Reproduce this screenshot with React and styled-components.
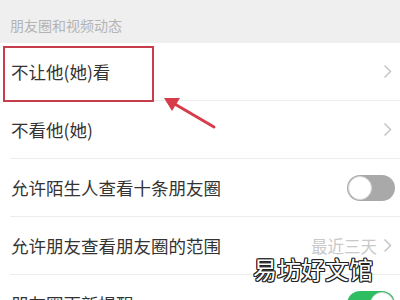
import styled, { createGlobalStyle } from 'styled-components';

const GlobalStyle = createGlobalStyle`
  html, body {
    margin: 0;
    padding: 0;
    background: #ffffff;
    overflow: hidden;
  }
  body {
    font-family: "Noto Sans CJK SC", "Noto Sans", sans-serif;
  }
`;

const Screen = styled.div`
  position: relative;
  width: 400px;
  height: 300px;
  overflow: hidden;
  background: #ffffff;
`;

const SectionHeader = styled.div`
  height: 43px;
  box-sizing: border-box;
  background: #efefef;
  display: flex;
  align-items: center;
  padding: 6px 0 0 10px;
  font-size: 14px;
  color: #b4b4b4;
`;

const Row = styled.div`
  height: 58px;
  box-sizing: border-box;
  margin-left: 10px;
  padding: 0 8px 0 1px;
  display: flex;
  align-items: center;
  justify-content: space-between;
  border-bottom: 1px solid #ececec;
`;

const Label = styled.span`
  font-size: 17.5px;
  color: #333333;
  white-space: nowrap;
`;

const Trailing = styled.div`
  display: flex;
  align-items: center;
  gap: 6px;
  margin-right: ${(p) => (p.$switch ? '-3px' : '0')};
`;

const Value = styled.span`
  font-size: 16.5px;
  color: #c9c9c9;
`;

const Switch = styled.div`
  width: 48px;
  height: 26px;
  box-sizing: border-box;
  border-radius: 13px;
  background: ${(p) => (p.$on ? '#2fbd62' : '#a9a9a9')};
  display: flex;
  align-items: center;
  justify-content: ${(p) => (p.$on ? 'flex-end' : 'flex-start')};
  padding: 1px;
`;

const Knob = styled.div`
  width: 24px;
  height: 24px;
  box-sizing: border-box;
  border-radius: 50%;
  background: #ffffff;
  border: 1px solid #d6d6d6;
`;

const Highlight = styled.div`
  position: absolute;
  left: 3px;
  top: 46px;
  width: 151px;
  height: 56px;
  box-sizing: border-box;
  border: 2px solid #c73d4c;
`;

const ArrowSvg = styled.svg`
  position: absolute;
  left: 155px;
  top: 90px;
`;

const Watermark = styled.div`
  position: absolute;
  left: 253px;
  top: 251px;
  font-size: 24px;
  color: #ffffff;
  letter-spacing: 0;
  text-shadow:
    1px 0 0 #222, -1px 0 0 #222, 0 1px 0 #222, 0 -1px 0 #222,
    1px 1px 0 #222, -1px -1px 0 #222, 1px -1px 0 #222, -1px 1px 0 #222;
`;

const Chevron = () => (
  <svg width="9" height="15" viewBox="0 0 9 15">
    <path d="M1.5 1.5 L7.5 7.5 L1.5 13.5" fill="none" stroke="#c6c6c6" strokeWidth="1.5" />
  </svg>
);

const Toggle = ({ on }) => (
  <Switch $on={on}>
    <Knob />
  </Switch>
);

const rows = [
  { label: '不让他(她)看', chevron: true },
  { label: '不看他(她)', chevron: true },
  { label: '允许陌生人查看十条朋友圈', toggle: false },
  { label: '允许朋友查看朋友圈的范围', value: '最近三天', chevron: true },
  { label: '朋友圈更新提醒', toggle: true },
];

export default function App() {
  return (
    <Screen>
      <GlobalStyle />
      <SectionHeader>朋友圈和视频动态</SectionHeader>
      {rows.map((r) => (
        <Row key={r.label}>
          <Label>{r.label}</Label>
          <Trailing $switch={r.toggle !== undefined}>
            {r.value && <Value>{r.value}</Value>}
            {r.chevron && <Chevron />}
            {r.toggle !== undefined && <Toggle on={r.toggle} />}
          </Trailing>
        </Row>
      ))}
      <Highlight />
      <ArrowSvg width="70" height="45" viewBox="0 0 70 45">
        <line x1="59" y1="37" x2="18" y2="13" stroke="#d63c4a" strokeWidth="3" strokeLinecap="round" />
        <polygon points="9,8 25,8 17,21" fill="#d63c4a" />
      </ArrowSvg>
      <Watermark>易坊好文馆</Watermark>
    </Screen>
  );
}
